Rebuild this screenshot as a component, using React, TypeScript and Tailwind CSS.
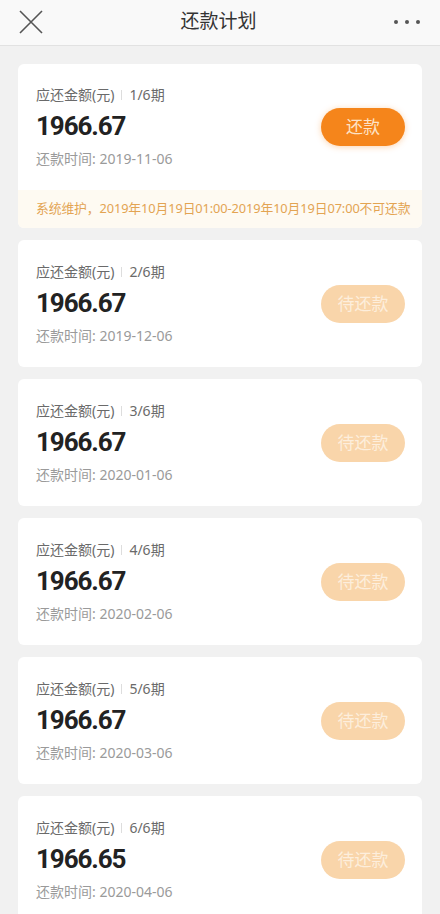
import React from "react";

type Plan = { period: string; amount: string; date: string; active?: boolean };

const plans: Plan[] = [
  { period: "1/6期", amount: "1966.67", date: "2019-11-06", active: true },
  { period: "2/6期", amount: "1966.67", date: "2019-12-06" },
  { period: "3/6期", amount: "1966.67", date: "2020-01-06" },
  { period: "4/6期", amount: "1966.67", date: "2020-02-06" },
  { period: "5/6期", amount: "1966.67", date: "2020-03-06" },
  { period: "6/6期", amount: "1966.65", date: "2020-04-06" },
];

const font = { fontFamily: '"Noto Sans", "Noto Sans CJK SC", sans-serif' };

function PlanCard({ p }: { p: Plan }) {
  return (
    <div className="bg-white rounded-[6px] overflow-hidden">
      <div className={`flex items-center justify-between pl-[18px] pr-[17px] ${p.active ? "h-[126px]" : "h-[127px]"}`}>
        <div className="flex flex-col">
          <div className="flex items-center h-[18px] text-[14px] text-[#6a6a6a] leading-[18px]">
            <span>应还金额(元)</span>
            <span className="mx-[7px] w-px h-[10px] bg-[#ddd]" />
            <span>{p.period}</span>
          </div>
          <div
            className="mt-[6px] h-[32px] leading-[32px] text-[26px] font-bold text-[#222] tracking-[-1.1px]"
            style={{ fontFamily: '"Roboto", "Liberation Sans", sans-serif' }}
          >
            {p.amount}
          </div>
          <div className="mt-[8px] h-[18px] leading-[18px] text-[14px] text-[#9a9a9a]">
            还款时间: {p.date}
          </div>
        </div>
        {p.active ? (
          <button className="w-[84px] h-[38px] rounded-full bg-[#f5851b] text-[#fde3c6] text-[17px] shadow-[0_1px_6px_rgba(245,133,27,0.35)]">
            还款
          </button>
        ) : (
          <button className="w-[84px] h-[38px] rounded-full bg-[#f9d5aa] text-[#fdeedc] text-[17px]">
            待还款
          </button>
        )}
      </div>
      {p.active && (
        <div className="h-[38px] flex items-center pl-[18px] bg-[#fefaf2] text-[12.8px] text-[#e3a452] whitespace-nowrap tracking-[-0.1px]">
          系统维护，2019年10月19日01:00-2019年10月19日07:00不可还款
        </div>
      )}
    </div>
  );
}

export default function App() {
  return (
    <div className="w-[440px] h-[914px] overflow-hidden bg-[#f1f1f1]" style={font}>
      <div className="h-[46px] bg-[#f9f9f9] border-b border-[#e2e2e2] flex items-center justify-between pl-[19px] pr-[20px]">
        <svg width="24" height="24" viewBox="0 0 24 24" className="-mt-[2px]">
          <path d="M1 1 L23 23 M23 1 L1 23" stroke="#555" strokeWidth="1.6" fill="none" />
        </svg>
        <div className="text-[19px] text-[#333] -mt-[2px]">还款计划</div>
        <div className="flex gap-[7px] items-center w-[26px] -mt-[2px]">
          <span className="w-[4px] h-[4px] rounded-full bg-[#555]" />
          <span className="w-[4px] h-[4px] rounded-full bg-[#555]" />
          <span className="w-[4px] h-[4px] rounded-full bg-[#555]" />
        </div>
      </div>
      <div className="flex flex-col gap-[12px] pt-[18px] px-[18px]">
        {plans.map((p) => (
          <PlanCard key={p.period} p={p} />
        ))}
      </div>
    </div>
  );
}
